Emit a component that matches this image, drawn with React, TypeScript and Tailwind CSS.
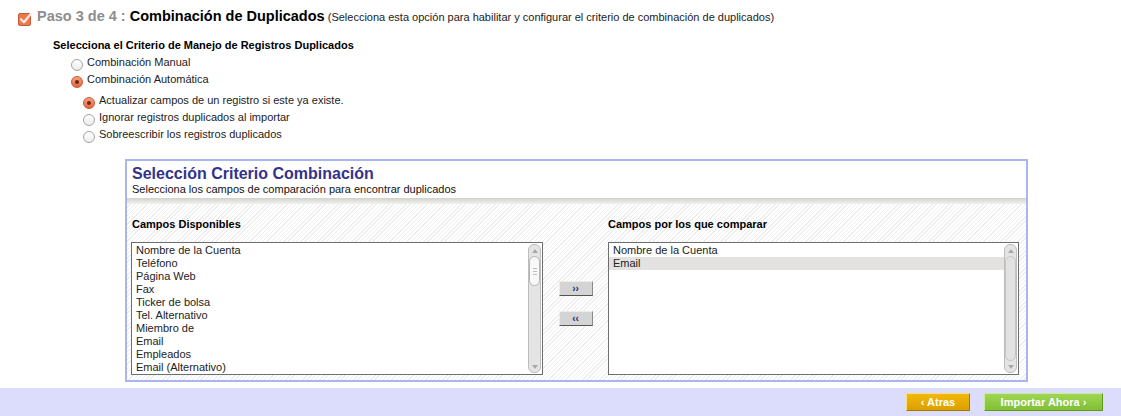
import React from 'react'

const available = [
  'Nombre de la Cuenta',
  'Teléfono',
  'Página Web',
  'Fax',
  'Ticker de bolsa',
  'Tel. Alternativo',
  'Miembro de',
  'Email',
  'Empleados',
  'Email (Alternativo)',
]

const selected = ['Nombre de la Cuenta', 'Email']

function StepCheck() {
  return (
    <svg width="16" height="16" viewBox="0 0 16 16" className="shrink-0">
      <rect x="0.5" y="3.5" width="12" height="12" rx="1.5" fill="#e9794f" stroke="#c85b33" />
      <path d="M3 9.2 L6 12.2 L12.5 4.2" fill="none" stroke="#fde9df" strokeWidth="2.2" strokeLinecap="round" strokeLinejoin="round" />
    </svg>
  )
}

function Radio({ checked }: { checked?: boolean }) {
  if (checked) {
    return (
      <span className="mt-[5px] w-[12px] h-[12px] shrink-0 rounded-full border border-[#c9572f] bg-gradient-to-b from-[#f5a283] to-[#e2653a] flex items-center justify-center">
        <span className="w-[4px] h-[4px] rounded-full bg-[#6b2812]" />
      </span>
    )
  }
  return <span className="mt-[5px] w-[12px] h-[12px] shrink-0 rounded-full border border-[#a4a4a4] bg-gradient-to-b from-[#ffffff] to-[#ececec]" />
}

function RadioRow({ label, checked, indent }: { label: string; checked?: boolean; indent: string }) {
  return (
    <div className={`flex items-center h-[17px] gap-[4px] ${indent}`}>
      <Radio checked={checked} />
      <span className="text-[11px] leading-[17px] text-[#222]">{label}</span>
    </div>
  )
}

function Arrow({ up }: { up?: boolean }) {
  return (
    <div className="h-[11px] flex items-center justify-center">
      <svg width="6" height="4" viewBox="0 0 6 4">
        <path d={up ? 'M0 4 L3 0 L6 4 Z' : 'M0 0 L3 4 L6 0 Z'} fill="#a8a8a8" />
      </svg>
    </div>
  )
}

function Scrollbar({ full }: { full?: boolean }) {
  return (
    <div className="w-[13px] my-[1px] mr-[1px] flex flex-col rounded-[6px] border border-[#bdbdbd] bg-[#e4e4e4]">
      <Arrow up />
      {full ? (
        <div className="flex-1 rounded-[6px] border border-[#c4c4c4] bg-[#e2e2e2]" />
      ) : (
        <>
          <div className="h-[30px] rounded-[6px] border border-[#b4b4b4] bg-[#f8f8f8] flex flex-col items-center justify-center gap-[2px]">
            <span className="w-[4px] h-px bg-[#bcbcbc]" />
            <span className="w-[4px] h-px bg-[#bcbcbc]" />
            <span className="w-[4px] h-px bg-[#bcbcbc]" />
          </div>
          <div className="flex-1" />
        </>
      )}
      <Arrow />
    </div>
  )
}

function ListBox({ items, highlight, fullThumb }: { items: string[]; highlight?: number; fullThumb?: boolean }) {
  return (
    <div className="h-[133px] flex border border-[#6e6e6e] bg-white">
      <div className="flex-1 pt-px">
        {items.map((item, i) => (
          <div
            key={item}
            className={`h-[13px] pl-[4px] text-[11px] leading-[13px] text-[#222] ${i === highlight ? 'bg-[#e3e2e0]' : ''}`}
          >
            {item}
          </div>
        ))}
      </div>
      <Scrollbar full={fullThumb} />
    </div>
  )
}

function MoveButton({ label }: { label: string }) {
  return (
    <button className="w-[34px] h-[15px] bg-[#d4d4d4] border-t border-l border-t-[#ececec] border-l-[#ececec] border-b border-r border-b-[#555] border-r-[#8a8a8a] flex items-center justify-center text-[10px] font-bold leading-none text-[#1d2b6e]">
      {label}
    </button>
  )
}

export default function App() {
  return (
    <div className="w-[1121px] h-[416px] flex flex-col bg-white font-['Liberation_Sans',Arial,sans-serif] overflow-hidden">
      <div className="flex-1 pl-[18px] pt-[7px]">
        {/* Step header */}
        <div className="flex items-start h-[18px]">
          <div className="mt-[3px]">
            <StepCheck />
          </div>
          <div className="ml-[3px] leading-[18px] whitespace-nowrap">
            <span className="text-[14.5px] font-bold text-[#8d8d8d]">Paso 3 de 4 : </span>
            <span className="text-[14.5px] font-bold text-black">Combinación de Duplicados</span>
            <span className="text-[11px] text-[#222]"> (Selecciona esta opción para habilitar y configurar el criterio de combinación de duplicados)</span>
          </div>
        </div>

        {/* Criteria */}
        <div className="mt-[12px] ml-[35px] h-[17px] text-[11px] leading-[17px] font-bold text-black">
          Selecciona el Criterio de Manejo de Registros Duplicados
        </div>
        <RadioRow indent="ml-[53px]" label="Combinación Manual" />
        <RadioRow indent="ml-[53px]" label="Combinación Automática" checked />
        <div className="mt-[4px]">
          <RadioRow indent="ml-[65px]" label="Actualizar campos de un registro si este ya existe." checked />
          <RadioRow indent="ml-[65px]" label="Ignorar registros duplicados al importar" />
          <RadioRow indent="ml-[65px]" label="Sobreescribir los registros duplicados" />
        </div>

        {/* Match criteria panel */}
        <div className="mt-[16px] ml-[107px] w-[903px] h-[223px] border-2 border-[#a9b5ef] flex flex-col">
          <div className="h-[37px] bg-white pl-[5px] pt-[4px]">
            <div className="text-[16px] leading-[18px] font-bold text-[#34338a]">Selección Criterio Combinación</div>
            <div className="text-[11px] leading-[13px] text-[#111]">Selecciona los campos de comparación para encontrar duplicados</div>
          </div>
          <div className="h-[6px] bg-gradient-to-b from-[#d2d2cc] to-[#f1f1ee]" />
          <div className="flex-1 pl-[4px] pt-[14px] bg-[repeating-linear-gradient(135deg,#ffffff_0px,#ffffff_2px,#eeeeee_2px,#eeeeee_3px)]">
            <div className="grid grid-cols-[412px_65px_411px]">
              <div>
                <div className="h-[13px] mb-[11px] pl-px text-[11px] leading-[13px] font-bold text-black">Campos Disponibles</div>
                <ListBox items={available} />
              </div>
              <div className="pt-[63px] flex flex-col items-center gap-[15px]">
                <MoveButton label="››" />
                <MoveButton label="‹‹" />
              </div>
              <div>
                <div className="h-[13px] mb-[11px] text-[11px] leading-[13px] font-bold text-black">Campos por los que comparar</div>
                <ListBox items={selected} highlight={1} fullThumb />
              </div>
            </div>
          </div>
        </div>
      </div>

      {/* Footer */}
      <div className="h-[28px] bg-[#dcdcfc] flex items-center justify-end gap-[14px] pr-[18px]">
        <button className="w-[64px] h-[18px] border border-t-[#f7dc8a] border-l-[#f7dc8a] border-b-[#a37a00] border-r-[#a37a00] bg-gradient-to-b from-[#f2b80a] to-[#dba000] text-white text-[11px] font-bold leading-none">
          ‹ Atras
        </button>
        <button className="w-[119px] h-[18px] border border-t-[#cdeaa3] border-l-[#cdeaa3] border-b-[#5f9a1f] border-r-[#5f9a1f] bg-gradient-to-b from-[#9fd552] to-[#82c034] text-white text-[11px] font-bold leading-none">
          Importar Ahora ›
        </button>
      </div>
    </div>
  )
}
